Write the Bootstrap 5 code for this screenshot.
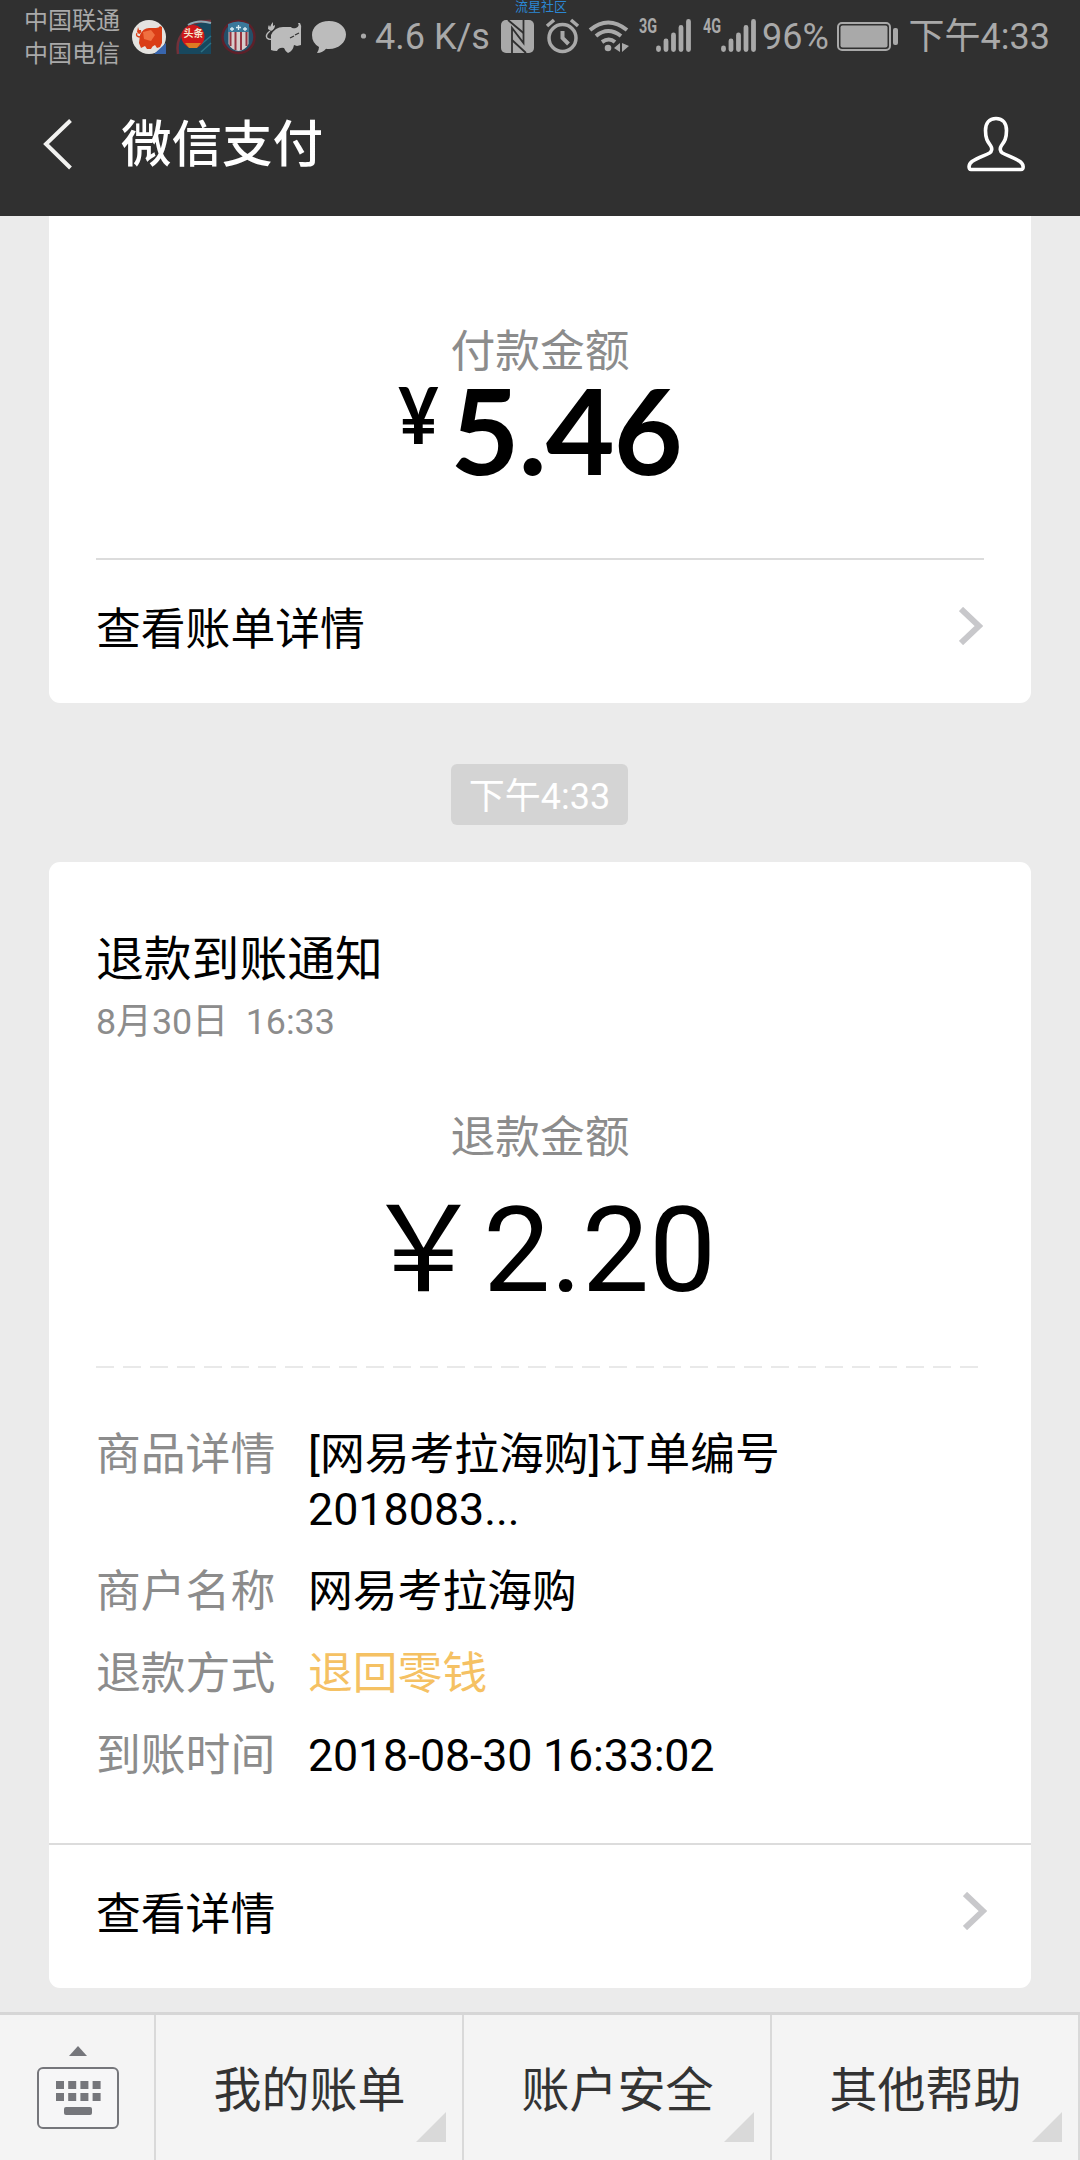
<!DOCTYPE html>
<html lang="zh-CN">
<head>
<meta charset="utf-8">
<meta name="viewport" content="width=device-width, initial-scale=1">
<title>微信支付</title>
<link href="https://cdn.jsdelivr.net/npm/bootstrap@5.3.0/dist/css/bootstrap.min.css" rel="stylesheet">
<style>
body{font-family:Roboto,"Noto Sans CJK SC",sans-serif;background:#ebebeb;color:#000;font-size:44.8px;line-height:55px;width:1080px;height:2160px;overflow:hidden}
svg{display:block;flex:none}
.top-area{background:#303030;height:216px}
.status{height:72px;color:#a9a9a9;font-size:36px;line-height:74px;white-space:nowrap}
.status>*{flex:none}
.carriers{font-size:24px;line-height:33px;padding:5px 0 0 24px;width:132px}
.site-tag{position:absolute;left:515px;top:-2px;font-size:13px;line-height:17px;color:#2b87d3}
.rate{width:126px;padding-left:1px}
.netgen{font:700 20px/20px Roboto,sans-serif;transform:scaleX(.72);transform-origin:0 0;width:17px;margin-top:16px}
.clock{margin-right:30px}
.titlebar{height:144px;padding:0 55px 0 43px;color:#fff}
.titlebar h1{font-size:50.5px;line-height:60px;font-weight:500;margin:1px 0 0 48px}
.msg{background:#fff;width:982px;margin:0 auto;padding:0 47px}
.msg-first{height:487px;border-radius:0 0 11px 11px;padding-top:113px}
.msg-second{height:1126px;border-radius:11px;padding-top:68px}
.dim{color:#8c8c8c}
.paid-label{line-height:45px}
.paid{font-family:Lato,sans-serif;font-weight:700;height:108px;margin:1px 0 75px}
.paid .yen{font-size:78px;line-height:80px;margin-top:-1px;margin-right:9px;letter-spacing:-2px;transform:scaleX(.9);transform-origin:0 0}
.paid .num{font-size:119px;line-height:109px;letter-spacing:-1px}
.go{height:144px;padding-bottom:4px;border-top:2px solid #dcdcdc}
.go svg{margin-top:-6px;margin-right:1px}
.stamp{background:#d4d4d4;color:#fff;font-size:36px;line-height:61px;height:61px;width:177px;border-radius:6px;margin:61px auto 37px 451px;padding-top:3px}
.msg-title{font-size:47.8px;line-height:60px}
.msg-date{font-size:35.8px;line-height:48px;margin-top:8px;white-space:pre}
.refund-label{line-height:60px;margin-top:62px}
.refund{font-size:119.5px;line-height:140px;margin-top:12px}
.dashes{height:2px;margin:46px 5px 59px 0;background:repeating-linear-gradient(90deg,#e9e9e9 0 18px,transparent 18px 27px)}
.facts{gap:27px;margin-bottom:60px}
.facts dt{width:212px;font-weight:400}
.facts dt,.facts dd{margin-bottom:0}
.facts .when{letter-spacing:-.2px}
.gold{color:#f5c163}
.edge{margin:0 -47px;padding-left:47px;padding-right:43px}
.menu{height:148px;background:#f4f4f4;border-top:3px solid #d6d6d6;margin-top:24px;color:#333;font-size:48px}
.menu .kb{width:156px;border-right:2px solid #d9d9d9}
.menu .entry{width:308px;border-right:2px solid #d9d9d9;padding:6px 0 0 1px}
.entry::after{content:"";position:absolute;right:16px;bottom:18px;width:30px;height:30px;background:#d9d9d9;clip-path:polygon(100% 0,100% 100%,0 100%)}
</style>
</head>
<body>
<header class="top-area">
  <div class="status d-flex position-relative">
    <div class="carriers"><div>中国联通</div><div>中国电信</div></div>
    <span class="site-tag">流星社区</span>
    <!-- app notifications -->
    <svg width="224" height="72" viewBox="132 0 224 72">
      <circle cx="149" cy="37" r="17" fill="#e4e3e0"/>
      <path d="M154 54h12V43z" fill="#3865ad"/>
      <path d="M140 35q3-7 9-7h7q3 0 4-2l2 1v16l-2 4-3 1-2-3q-3 1-4 4h-4l-2-3-4 2-2-5z" fill="#da3d16"/>
      <path d="M143 32l8-2 4 5-4 6-7-2z" fill="#f07040"/>
      <path d="M137 32l1-5 1 3 2 0q1 3-2 4z" fill="#da3d16"/>
      <path d="M141 37q-6 0-4-4" stroke="#da3d16" fill="none" stroke-width="1.300"/>
      <path d="M178 54q-2-12 4-20 8-14 29-14v34z" fill="#18485e"/>
      <path d="M178 54q-2-12 4-20 8-14 29-13" fill="none" stroke="#733039" stroke-width="2.500"/>
      <path d="M188 25q10-6 23-2" fill="none" stroke="#8eaab5" stroke-width="2"/>
      <path d="M201 52l10-9M199 46l12-10" stroke="#2e7285" stroke-width="1.500"/>
      <circle cx="193" cy="36.500" r="11.500" fill="#cf1719"/>
      <path d="M185 43h16l-4 5h-8z" fill="#de7b22"/>
      <text x="183.500" y="37" font-size="10" font-weight="700" fill="#f4e7ce">头条</text>
      <circle cx="238.500" cy="37" r="16" fill="#254f68" stroke="#5e2029" stroke-width="2.500"/>
      <path d="M228.500 32h20v12q-3 6-10 7-7-1-10-7z" fill="#d6cdcc"/>
      <path d="M230.500 32v14M235.500 32v18M241 32v18M246.500 32v14" stroke="#963341" stroke-width="2"/>
      <path d="M228 24q10-5 21 0v8h-21z" fill="#3b789b"/>
      <path d="M232 27v4M230 29h4M238.500 25v5M236 27.500h5M245 27v4M243 29h4" stroke="#d9ecf3" stroke-width="1.300"/>
      <path d="M271 35q4-8 12-8h8q1 2 5 1 4-2 2-5h2q2 3 1 7v15l-4 1-3-1q-1 6-6 8-3-2-4-5-5-1-7 3-4 0-6-1z" fill="#bbb"/>
      <path d="M268 29q0-3 1-4l1 2q1-3 3-5 0 2 0 4l2-1q0 4-4 6z" fill="#bbb"/>
      <path d="M270 31q-5 4-3 7 2 2 5 1" stroke="#bbb" stroke-width="1.400" fill="none"/>
      <path d="M290 38l4-2M295 35l4-2" stroke="#303030" stroke-width="1.200"/>
      <path d="M329 21c10 0 17 6 17 13.500S339 49 329 49q-2 0-3-.3-3 4-9 4.300 2-3 2-6-7-4-7-12C312 27 319 21 329 21z" fill="#bcbcbc"/>
    </svg>
    <svg width="18" height="72"><circle cx="7.500" cy="36" r="2.600" fill="#a9a9a9"/></svg>
    <span class="rate">4.6 K/s</span>
    <!-- nfc, alarm, wifi -->
    <svg width="139" height="72" viewBox="500 0 139 72" fill="none" stroke="#a9a9a9">
      <rect x="501" y="20" width="33" height="33" rx="5" fill="#a9a9a9" stroke="none"/>
      <path d="M512 53V28L523.500 43V20" stroke="#303030" stroke-width="1.800"/>
      <path d="M508 20l15.500 13M512 40l14 13" stroke="#303030" stroke-width="1.800"/>
      <circle cx="562.500" cy="38" r="13.500" stroke-width="3.500"/>
      <path d="M562.500 31v7l6 6" stroke-width="4"/>
      <path d="M547 26l7-6M571 20l7 6" stroke-width="3.600"/>
      <path d="M590 30q18-15 37 0M596 36q12-10 25 0M602 42q7-5 13 0" stroke-width="4"/>
      <circle cx="608" cy="48" r="3.300" fill="#a9a9a9" stroke="none"/>
      <path d="M620 43v9l-6-4zM622 43v9l7-6z" fill="#a9a9a9" stroke="none"/>
    </svg>
    <span class="netgen">3G</span>
    <svg width="47" height="72" viewBox="656 0 47 72" stroke="#a9a9a9" stroke-width="4.800" stroke-linecap="round"><path d="M658.500 48v1.500M666 41v8.500M673.500 35v14.500M681 27.500v22M688.500 21.500v28"/></svg>
    <span class="netgen">4G</span>
    <svg width="42" height="72" viewBox="720 0 42 72" stroke="#a9a9a9" stroke-width="4.800" stroke-linecap="round"><path d="M723.500 48v1.500M731 41v8.500M738.500 35v14.500M746 27.500v22M753.500 21.500v28"/></svg>
    <span>96%</span>
    <svg class="ms-auto" width="72" height="72" viewBox="838 0 72 72"><rect x="839" y="23" width="52" height="27" rx="4" fill="none" stroke="#a9a9a9" stroke-width="2"/><rect x="841.500" y="25.500" width="47" height="22" rx="2" fill="#a9a9a9"/><rect x="894" y="28" width="5" height="17" rx="2" fill="#a9a9a9"/></svg>
    <span class="clock">下午4:33</span>
  </div>
  <nav class="titlebar d-flex align-items-center">
    <svg width="30" height="52" viewBox="0 0 30 52"><path d="M27.500 2.500L3 26l24.500 24" fill="none" stroke="#f2f2f0" stroke-width="4"/></svg>
    <h1>微信支付</h1>
    <svg class="ms-auto" width="60" height="58" viewBox="0 0.500 60 58"><path d="M31 4C24 4 20.500 9 20.500 16c0 8 2 11 5 15 2 3 1.500 6-1 7.500C20 41 13 43 7 47c-4 3-3.500 8-1 8h50c3 0 3-5-1-8-6-4-13-6-17.500-8.500-2.500-1.500-3-4.500-1-7.500 3-4 5-7 5-15C41.500 9 38 4 31 4z" fill="none" stroke="#fff" stroke-width="3.600"/></svg>
  </nav>
</header>
<main>
  <section class="msg msg-first">
    <div class="paid-label dim text-center">付款金额</div>
    <div class="paid d-flex justify-content-center align-items-start"><span class="yen">¥</span><span class="num">5.46</span></div>
    <div class="go d-flex align-items-center justify-content-between">查看账单详情
      <svg width="24" height="38" viewBox="0 0 24 38"><path d="M2 2l18 17L2 36" fill="none" stroke="#c8c8cb" stroke-width="6"/></svg>
    </div>
  </section>
  <div class="stamp text-center">下午4:33</div>
  <section class="msg msg-second">
    <div class="msg-title">退款到账通知</div>
    <div class="msg-date dim">8月30日  16:33</div>
    <div class="refund-label dim text-center">退款金额</div>
    <div class="refund text-center">￥2.20</div>
    <div class="dashes"></div>
    <div class="facts d-flex flex-column">
      <dl class="d-flex mb-0"><dt class="dim">商品详情</dt><dd>[网易考拉海购]订单编号<br>2018083...</dd></dl>
      <dl class="d-flex mb-0"><dt class="dim">商户名称</dt><dd>网易考拉海购</dd></dl>
      <dl class="d-flex mb-0"><dt class="dim">退款方式</dt><dd class="gold">退回零钱</dd></dl>
      <dl class="d-flex mb-0"><dt class="dim">到账时间</dt><dd class="when">2018-08-30 16:33:02</dd></dl>
    </div>
    <div class="go edge d-flex align-items-center justify-content-between">查看详情
      <svg width="24" height="38" viewBox="0 0 24 38"><path d="M2 2l18 17L2 36" fill="none" stroke="#c8c8cb" stroke-width="6"/></svg>
    </div>
  </section>
</main>
<footer class="menu d-flex">
  <div class="kb">
    <svg width="154" height="145" viewBox="0 2015 154 145">
      <path d="M69 2056l9-10 9 10z" fill="#75767b"/>
      <rect x="38" y="2068" width="80" height="60" rx="5" fill="#f6f6f7" stroke="#75767b" stroke-width="2"/>
      <g stroke="#75767b" stroke-width="8" stroke-dasharray="8 4.200"><path d="M56 2085h45M56 2097h45"/></g>
      <rect x="64" y="2107" width="28" height="8" rx="2" fill="#75767b"/>
    </svg>
  </div>
  <div class="entry position-relative d-flex align-items-center justify-content-center">我的账单</div>
  <div class="entry position-relative d-flex align-items-center justify-content-center">账户安全</div>
  <div class="entry position-relative d-flex align-items-center justify-content-center">其他帮助</div>
</footer>
<script src="https://cdn.jsdelivr.net/npm/bootstrap@5.3.0/dist/js/bootstrap.bundle.min.js"></script>
</body>
</html>
